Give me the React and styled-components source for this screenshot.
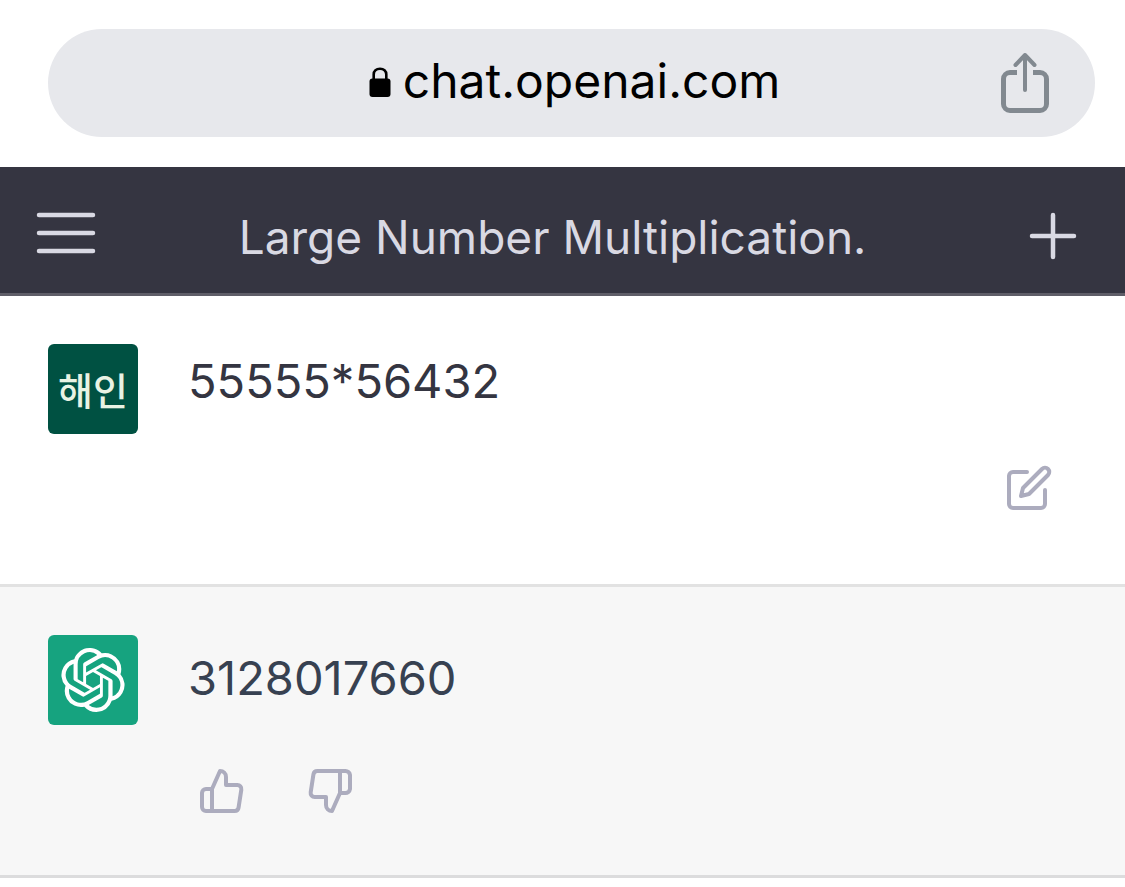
import React from 'react';

import styled, { createGlobalStyle } from 'styled-components';
import { FiEdit, FiThumbsDown, FiThumbsUp } from 'react-icons/fi';
import { SiOpenai } from 'react-icons/si';

const GlobalStyle = createGlobalStyle`
  * {
    box-sizing: border-box;
  }

  body {
    margin: 0;
    background: #fff;
    font-family: Inter, 'Liberation Sans', 'Noto Sans CJK KR', sans-serif;
    /* keep the asterisk raised between digits */
    font-variant-ligatures: no-contextual;
  }
`;

const BrowserBar = styled.div`
  padding: 29px 30px 30px 48px;
`;

const AddressBox = styled.div`
  display: grid;
  grid-template-columns: 54px 1fr 48px;
  align-items: center;
  height: 108px;
  padding: 0 46px;
  border-radius: 54px;
  background: #e7e8ec;
`;

const Address = styled.a`
  display: flex;
  grid-column: 2;
  justify-content: center;
  align-items: baseline;
  gap: 12px;
  padding-bottom: 4px;
  color: #000;
  font-size: 48px;
  line-height: 60px;
  text-decoration: none;
`;

const IconButton = styled.button`
  display: flex;
  flex: none;
  padding: 0;
  border: 0;
  background: none;
  color: ${({ $color }) => $color || '#acacbe'};
  cursor: pointer;
`;

const Header = styled.header`
  display: flex;
  align-items: flex-start;
  min-height: 129px;
  padding: 30px 36px 0 30px;
  border-bottom: 3px solid #5f5e68;
  background: #353541;
`;

const Title = styled.h1`
  flex: 1;
  margin: 0;
  padding-right: 14px;
  color: #d9d9e3;
  font-weight: 400;
  font-size: 46px;
  line-height: 80px;
  text-align: center;
`;

const Message = styled.article`
  display: flex;
  gap: 50px;
  min-height: 291px;
  padding: 48px 72px 48px 48px;
  border-bottom: 3px solid ${({ $answer }) => ($answer ? '#dcdcdd' : '#e2e2e2')};
  background: ${({ $answer }) => ($answer ? '#f7f7f7' : '#fff')};
  color: ${({ $answer }) => ($answer ? '#374151' : '#343541')};
`;

const Avatar = styled.div`
  display: flex;
  flex: none;
  justify-content: center;
  align-items: center;
  width: 90px;
  height: 90px;
  border-radius: 6px;
  background: ${({ $answer }) => ($answer ? '#16a37f' : '#005142')};
  color: ${({ $answer }) => ($answer ? '#fff' : '#e9f3e4')};
  font-weight: 500;
  font-size: 38px;
  line-height: 48px;
  font-family: 'Noto Sans CJK KR', sans-serif;
`;

const Content = styled.div`
  display: flex;
  flex: 1;
  flex-direction: column;
  gap: 46px;
`;

const Text = styled.p`
  margin: 0;
  font-size: 47px;
  line-height: ${({ $answer }) => ($answer ? '86px' : '74px')};
`;

const Actions = styled.div`
  display: flex;
  justify-content: ${({ $end }) => ($end ? 'flex-end' : 'flex-start')};
  gap: 60px;
  padding-left: 10px;
`;

function LockIcon() {
  return (
    <svg width="22" height="32" viewBox="0 0 22 32" aria-hidden="true">
      <path
        d="M4.7 14V8.5C4.7 4.8 7.3 2.7 11 2.7s6.3 2.1 6.300 5.800V14"
        fill="none"
        stroke="currentColor"
        strokeWidth="2.6"
      />
      <rect x="0.5" y="12.5" width="21" height="18.5" rx="3" fill="currentColor" />
    </svg>
  );
}

function ShareIcon() {
  return (
    <svg
      width="48"
      height="62"
      viewBox="0 0 48 62"
      fill="none"
      stroke="currentColor"
      strokeLinecap="round"
      strokeLinejoin="round"
      aria-hidden="true"
    >
      <path d="M24 3v35M14.5 13 24 3l9.5 10" strokeWidth="4" />
      <path
        d="M16 20.5H9A6.500 6.500 0 0 0 2.500 27v25A6.500 6.500 0 0 0 9 58.500h30a6.500 6.500 0 0 0 6.500-6.500V27a6.500 6.500 0 0 0-6.500-6.500h-7"
        strokeWidth="5"
        strokeLinecap="butt"
      />
    </svg>
  );
}

function LineIcon({ d }) {
  return (
    <svg
      width="72"
      height="72"
      viewBox="0 0 24 24"
      fill="none"
      stroke="currentColor"
      strokeWidth="1.5"
      strokeLinecap="round"
      aria-hidden="true"
    >
      <path d={d} />
    </svg>
  );
}

export default function App() {
  return (
    <>
      <GlobalStyle />
      <BrowserBar>
        <AddressBox>
          <Address href="#chat">
            <LockIcon />
            chat.openai.com
          </Address>
          <IconButton type="button" aria-label="Share" $color="#828990">
            <ShareIcon />
          </IconButton>
        </AddressBox>
      </BrowserBar>
      <Header>
        <IconButton type="button" aria-label="Open sidebar" $color="#d9d9e3">
          <LineIcon d="M3 6h18M3 12h18M3 18h18" />
        </IconButton>
        <Title>Large Number Multiplication.</Title>
        <IconButton type="button" aria-label="New chat" $color="#d9d9e3">
          <LineIcon d="M12 6v14M5 13h14" />
        </IconButton>
      </Header>
      <main id="chat">
        <Message>
          <Avatar>해인</Avatar>
          <Content>
            <Text>55555*56432</Text>
            <Actions $end>
              <IconButton type="button" aria-label="Edit message">
                <FiEdit size={48} />
              </IconButton>
            </Actions>
          </Content>
        </Message>
        <Message $answer>
          <Avatar $answer>
            <SiOpenai size={64} />
          </Avatar>
          <Content>
            <Text $answer>3128017660</Text>
            <Actions>
              <IconButton type="button" aria-label="Good response">
                <FiThumbsUp size={48} />
              </IconButton>
              <IconButton type="button" aria-label="Bad response">
                <FiThumbsDown size={48} />
              </IconButton>
            </Actions>
          </Content>
        </Message>
      </main>
    </>
  );
}
